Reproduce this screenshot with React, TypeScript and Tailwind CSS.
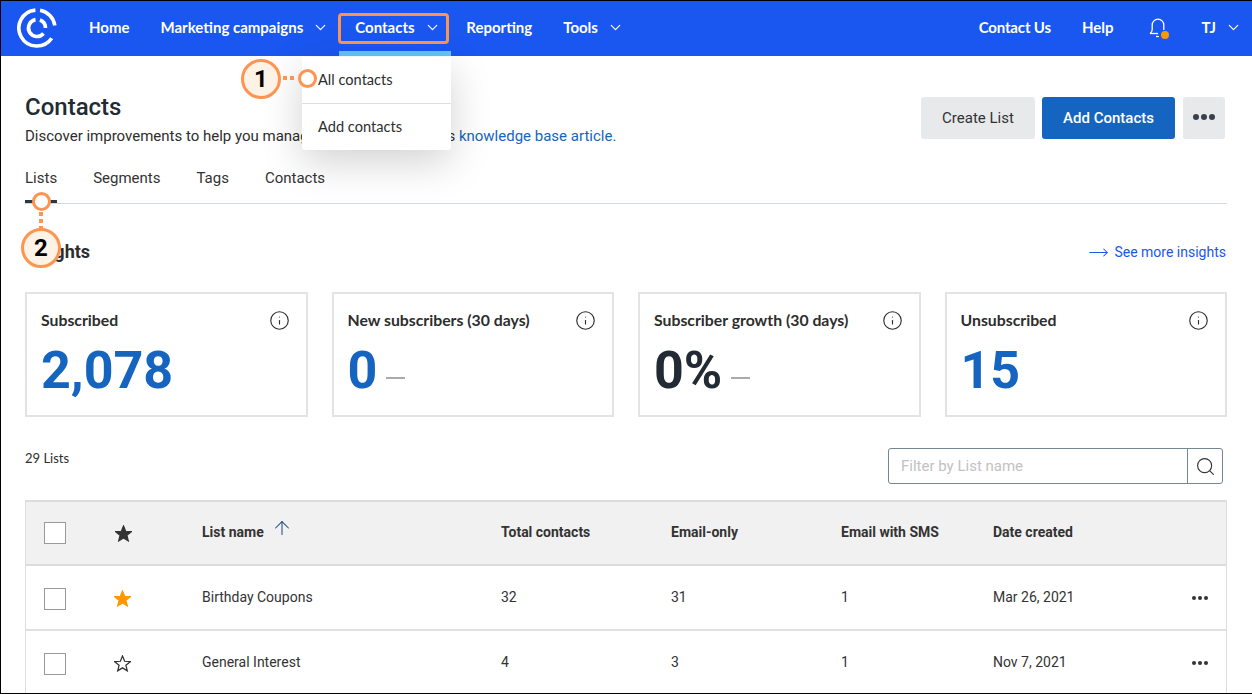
import { ArrowUp, ChevronDown, Search, Info, MoveRight } from 'lucide-react';

const navFont = "font-['Lato',sans-serif]";

function NavItem({ label, caret, className = '' }: { label: string; caret?: boolean; className?: string }) {
  return (
    <div className={`flex items-center text-white text-[15px] font-bold ${navFont} ${className}`}>
      <span>{label}</span>
      {caret && <ChevronDown className="w-[17px] h-[17px] ml-[9px]" strokeWidth={1.7} />}
    </div>
  );
}

function Logo() {
  return (
    <svg width="40" height="40" viewBox="0 0 40 40" fill="none" stroke="#fff" strokeWidth="3.6">
      <path d="M18.4 2.1A18 18 0 1 0 34.7 30.3" />
      <path d="M23.1 2.3A18 18 0 0 1 37.8 17.5" />
      <path d="M18.52 11.63A8.5 8.5 0 1 0 26.5 25.47" />
      <path d="M22.9 12A8.5 8.5 0 0 1 28.5 20" />
    </svg>
  );
}

function StarIcon({ fill, stroke, className = '' }: { fill: string; stroke: string; className?: string }) {
  return (
    <svg width="17" height="17" viewBox="0 0 16 16" className={className} fill={fill} stroke={stroke} strokeWidth="1.2">
      <path d="M8 1 10 5.9 15.3 6.3 11.2 9.7 12.5 14.9 8 12.1 3.5 14.9 4.8 9.7.7 6.3 6 5.9Z" />
    </svg>
  );
}

function StatCard({ title, value, color = 'text-[#1565c0]', dash }: { title: string; value: string; color?: string; dash?: boolean }) {
  return (
    <div className="h-[125px] border-2 border-[#e3e3e3] pl-[14px] pr-[16px] pt-[15px]">
      <div className="flex items-center justify-between h-[22px]">
        <span className={`text-[15.8px] font-bold text-[#2d2d2d] ${navFont}`}>{title}</span>
        <Info className="w-[21px] h-[21px] text-[#2b2b2b]" strokeWidth={1.3} />
      </div>
      <div className="flex items-end mt-[10px]">
        <span className={`text-[52px] leading-[60px] font-bold ${color}`}>{value}</span>
        {dash && <span className="w-[19px] h-[2px] bg-[#aaaaaa] ml-[9px] mb-[22px]" />}
      </div>
    </div>
  );
}

function Marker({ n, className }: { n: string; className: string }) {
  return (
    <div className={`absolute w-[40px] h-[40px] rounded-full bg-[#fdf2e6] border-[3px] border-[#ff9450] flex items-center justify-center text-[24px] font-bold text-black ${className}`}>
      {n}
    </div>
  );
}

function Dot({ className }: { className: string }) {
  return <div className={`absolute w-[19px] h-[19px] rounded-full bg-white border-[3px] border-[#ff9450] ${className}`} />;
}

function Row({ name, total, email, sms, date, fav }: { name: string; total: string; email: string; sms: string; date: string; fav?: boolean }) {
  return (
    <div className="h-[65px] grid grid-cols-[71px_87px_299px_170px_170px_152px_1fr] items-center pl-[18px] border-b-2 border-[#e0e0e0] text-[14px] text-[#333]">
      <div className="w-[22px] h-[22px] mt-[3px] border border-[#999] bg-white" />
      <div className="-ml-[1px] mt-[1px]">
        {fav ? <StarIcon fill="#ff9800" stroke="#ff9800" /> : <StarIcon fill="none" stroke="#333" />}
      </div>
      <div>{name}</div>
      <div>{total}</div>
      <div>{email}</div>
      <div>{sms}</div>
      <div>{date}</div>
    </div>
  );
}

function RowMenu({ className }: { className: string }) {
  return (
    <div className={`absolute left-[1191px] flex gap-[2px] ${className}`}>
      <span className="w-[4px] h-[4px] rounded-full bg-[#333]" />
      <span className="w-[4px] h-[4px] rounded-full bg-[#333]" />
      <span className="w-[4px] h-[4px] rounded-full bg-[#333]" />
    </div>
  );
}

export default function App() {
  return (
    <div className="relative w-[1252px] h-[694px] overflow-hidden border-l border-t border-b border-black bg-white font-['Roboto',sans-serif]">
      {/* top nav */}
      <header className="h-[55px] bg-[#1a56f0] flex items-center pl-[16px] pr-[10px] pb-[2px]">
        <Logo />
        <NavItem label="Home" className="ml-[32px]" />
        <NavItem label="Marketing campaigns" caret className="ml-[31px]" />
        <div className="ml-[9px] w-[111px] h-[31px] mt-[2px] rounded-[4px] border-[3px] border-[#ff9450] flex items-center pl-[14px]">
          <NavItem label="Contacts" caret className="-mt-[2px]" />
        </div>
        <NavItem label="Reporting" className="ml-[17px]" />
        <NavItem label="Tools" caret className="ml-[31px]" />
        <div className="flex-1" />
        <NavItem label="Contact Us" className="tracking-[-0.15px]" />
        <NavItem label="Help" className="ml-[31px]" />
        <div className="relative ml-[35px] w-[18px] h-[22px]">
          <svg width="18" height="22" viewBox="0 0 18 22" fill="none" stroke="#fff" strokeWidth="1.3">
            <path d="M1 16.5c1.5-1 2.2-2 2.2-4V8a5.8 5.8 0 0 1 11.6 0v5" />
            <path d="M1 16.5h8" />
            <path d="M7 19.5h3" />
          </svg>
          <span className="absolute left-[12px] top-[14px] w-[8px] h-[8px] rounded-full bg-[#ff9800]" />
        </div>
        <NavItem label="TJ" caret className="ml-[35px]" />
      </header>

      {/* active tab strip + dropdown */}
      <div className="absolute left-[338px] top-[50px] w-[112px] h-[5px] bg-[#62c6f7]" />
      <div className="absolute left-[301px] top-[56px] w-[149px] h-[93px] bg-white rounded-b-[3px] shadow-[0_12px_40px_rgba(0,0,0,0.18)] text-[14.6px] text-[#2d2d2d] z-10">
        <div className={`h-[47px] pl-[16px] flex items-center border-b border-[#dedede] ${navFont}`}>All contacts</div>
        <div className={`h-[46px] pl-[16px] flex items-center ${navFont}`}>Add contacts</div>
      </div>

      <main className="px-[24px]">
        <div className="flex items-start justify-between h-[100px] pt-[36px] pr-[3px]">
          <div>
            <h1 className="text-[24px] leading-[30px] font-medium text-[#222b33]">Contacts</h1>
            <p className="text-[15px] leading-[20px] mt-[4px] text-[#2d2d2d]">
              Discover improvements to help you manage your contacts in this <a className="text-[#1565c0]">knowledge base article.</a>
            </p>
          </div>
          <div className="flex gap-[7px] pt-[5px]">
            <button className="w-[114px] h-[42px] pt-[1px] rounded-[3px] bg-[#e8e9eb] text-[15px] text-[#333]">Create List</button>
            <button className="w-[133px] h-[42px] pt-[1px] rounded-[3px] bg-[#1565c0] text-[15px] font-medium text-white">Add Contacts</button>
            <button className="ml-[1px] w-[42px] h-[42px] pb-[2px] rounded-[3px] bg-[#e8e9eb] flex items-center justify-center gap-[2px]">
              <span className="w-[6px] h-[6px] rounded-full bg-[#37414d]" />
              <span className="w-[6px] h-[6px] rounded-full bg-[#37414d]" />
              <span className="w-[6px] h-[6px] rounded-full bg-[#37414d]" />
            </button>
          </div>
        </div>

        {/* tabs */}
        <div className="flex gap-[36px] w-[1202px] h-[48px] border-b border-[#d3d8dc] text-[15px] text-[#333] pt-[11px] relative">
          <span>Lists</span>
          <span>Segments</span>
          <span>Tags</span>
          <span>Contacts</span>
          <div className="absolute left-0 bottom-0 w-[32px] h-[3px] bg-[#2b3742]" />
        </div>

        <div className="flex items-center justify-between h-[48px] mt-[24px] pr-[2px]">
          <span className="text-[18px] font-bold text-[#2d2d2d] pb-[2px]">Insights</span>
          <span className="flex items-center text-[14px] text-[#1a56f0]">
            <MoveRight className="w-[21px] h-[21px] mr-[5px]" strokeWidth={1.2} />
            See more insights
          </span>
        </div>

        {/* stat cards */}
        <div className="grid grid-cols-4 gap-[24px] mt-[16px] w-[1202px]">
          <StatCard title="Subscribed" value="2,078" />
          <StatCard title="New subscribers (30 days)" value="0" dash />
          <StatCard title="Subscriber growth (30 days)" value="0%" color="text-[#222b33]" dash />
          <StatCard title="Unsubscribed" value="15" />
        </div>

        <div className="flex justify-between mt-[31px] h-[37px] w-[1198px]">
          <span className={`text-[13px] pt-[1px] text-[#2d2d2d] ${navFont}`}>29 Lists</span>
          <div className="flex w-[335px] h-[36px] border border-[#75878f] rounded-[3px]">
            <span className="flex-1 pl-[12px] flex items-center text-[15px] text-[#c2c2c2]">Filter by List name</span>
            <span className="w-[35px] border-l border-[#75878f] flex items-center justify-center">
              <Search className="w-[21px] h-[21px] text-[#333]" strokeWidth={1.3} />
            </span>
          </div>
        </div>

        {/* table */}
        <div className="mt-[15px] w-[1202px] border-x border-[#dedede]">
          <div className="h-[66px] bg-[#f1f1f1] border-y-2 border-[#dcdcdc] grid grid-cols-[71px_87px_299px_170px_170px_152px_1fr] items-center pl-[18px] text-[14px] font-bold text-[#333]">
            <div className="w-[22px] h-[22px] border border-[#999] bg-white" />
            <div className="mt-[1px]">
              <StarIcon fill="#333" stroke="#333" />
            </div>
            <div className="flex items-center pb-[2px]">
              List name
              <ArrowUp className="w-[22px] h-[22px] ml-[7px] -translate-y-[4px] text-[#1a4a80]" strokeWidth={1.1} />
            </div>
            <div className="pb-[2px]">Total contacts</div>
            <div className="pb-[2px]">Email-only</div>
            <div className="pb-[2px]">Email with SMS</div>
            <div className="pb-[2px]">Date created</div>
          </div>
          <Row name="Birthday Coupons" total="32" email="31" sms="1" date="Mar 26, 2021" fav />
          <Row name="General Interest" total="4" email="3" sms="1" date="Nov 7, 2021" />
        </div>
      </main>

      <RowMenu className="top-[595px]" />
      <RowMenu className="top-[660px]" />

      {/* callouts */}
      <div className="absolute left-[282px] top-[75px] flex gap-[3px] z-20">
        <span className="w-[4px] h-[4px] bg-[#ff9450]" />
        <span className="w-[4px] h-[4px] bg-[#ff9450]" />
      </div>
      <div className="absolute left-[38px] top-[211px] flex flex-col gap-[3px] z-20">
        <span className="w-[4px] h-[4px] bg-[#ff9450]" />
        <span className="w-[4px] h-[4px] bg-[#ff9450]" />
        <span className="w-[4px] h-[4px] bg-[#ff9450]" />
      </div>
      <Marker n="1" className="left-[240px] top-[58px] z-20" />
      <Marker n="2" className="left-[20px] top-[227px] z-20" />
      <Dot className="left-[297px] top-[68px] z-20" />
      <Dot className="left-[31px] top-[191px] z-20" />
    </div>
  );
}
